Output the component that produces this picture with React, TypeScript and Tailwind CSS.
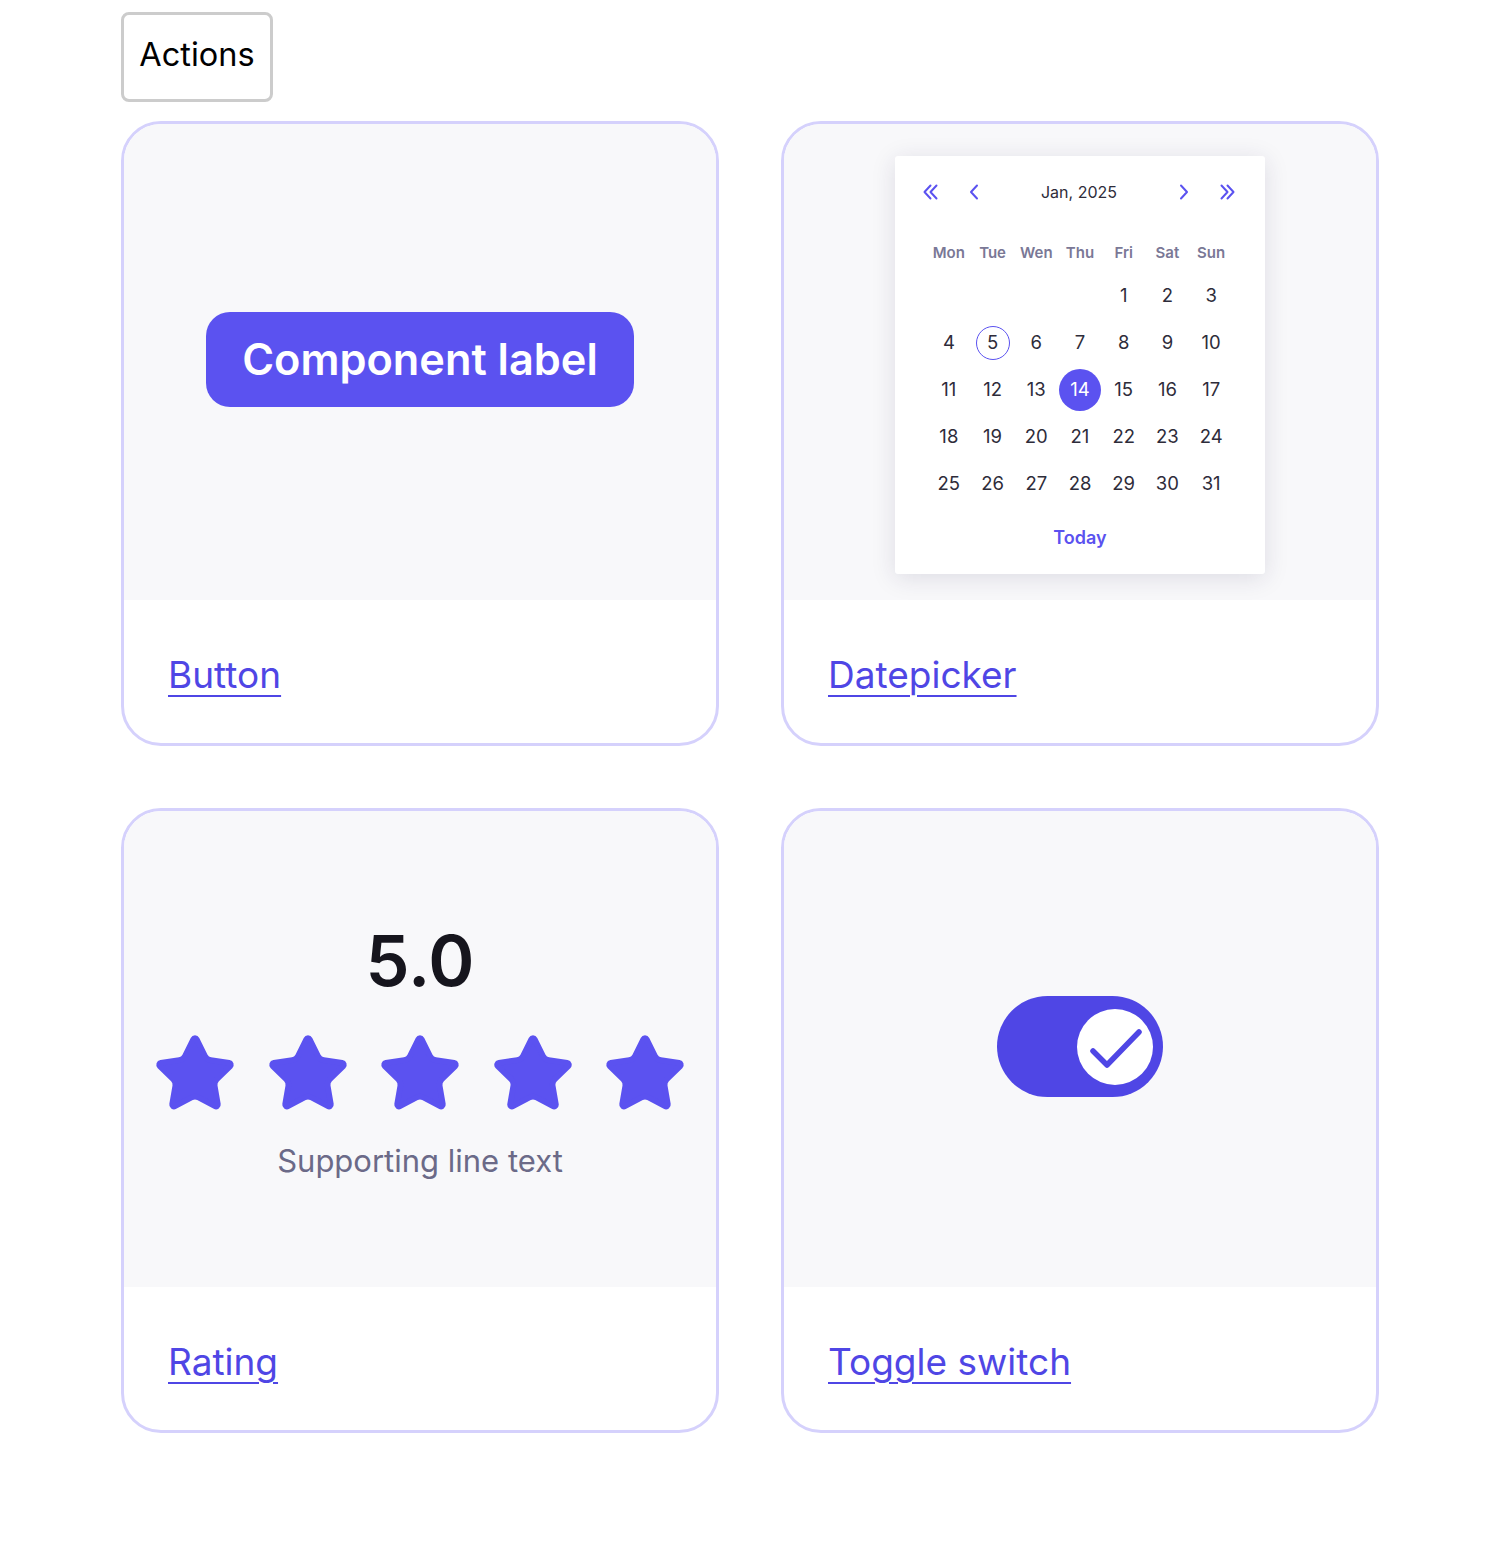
import { Star } from 'lucide-react';

const font = { fontFamily: 'Inter, "Noto Sans", sans-serif' };

const days: (number | null)[] = [null, null, null, null, 1, 2, 3, ...Array.from({ length: 28 }, (_, i) => i + 4)];
const weekdays = ['Mon', 'Tue', 'Wen', 'Thu', 'Fri', 'Sat', 'Sun'];

function Chevron({ double, dir }: { double?: boolean; dir: 'left' | 'right' }) {
  const flip = dir === 'right' ? 'scale(-1,1) translate(-18,0)' : undefined;
  return (
    <svg width="18" height="18" viewBox="0 0 18 18" fill="none" stroke="#5b52f0" strokeWidth="2" strokeLinecap="round" strokeLinejoin="round">
      <g transform={flip}>
        {double ? (
          <>
            <path d="M8.5 2.5 L2.5 9 L8.5 15.5" />
            <path d="M14.5 2.5 L8.5 9 L14.5 15.5" />
          </>
        ) : (
          <path d="M12 2.5 L6 9 L12 15.5" />
        )}
      </g>
    </svg>
  );
}

function Card({ title, children, top = 'center' }: { title: string; children: React.ReactNode; top?: 'center' | 'start' }) {
  return (
    <div className="border-[3px] border-[#d5d1fc] rounded-[40px] overflow-hidden bg-white">
      <div className={`h-[476px] bg-[#f8f8fa] flex justify-center ${top === 'center' ? 'items-center' : 'items-start pt-[32px]'}`}>
        {children}
      </div>
      <div className="h-[143px] px-[44px] pt-[5px] flex items-center">
        <a href="#" className="text-[37px] text-[#4f46e5] underline decoration-2 underline-offset-[7px] leading-none">
          {title}
        </a>
      </div>
    </div>
  );
}

function Datepicker() {
  return (
    <div className="w-[370px] bg-white rounded-[3px] shadow-[0_4px_24px_rgba(40,30,80,0.13)] px-[32px] pt-[24px] pb-[23px]">
      <div className="h-[24px] flex items-center">
        <div className="w-[28px] flex justify-center -ml-[10px]"><Chevron double dir="left" /></div>
        <div className="w-[28px] flex justify-center ml-[15px]"><Chevron dir="left" /></div>
        <div className="flex-1 text-center text-[16px] text-[#2e2c3a]">Jan, 2025</div>
        <div className="w-[28px] flex justify-center mr-[15px]"><Chevron dir="right" /></div>
        <div className="w-[28px] flex justify-center -mr-[8px]"><Chevron double dir="right" /></div>
      </div>
      <div className="grid grid-cols-7 mt-[37px] h-[24px] items-center">
        {weekdays.map((d) => (
          <div key={d} className="text-center text-[15px] font-semibold text-[#7a7896]">{d}</div>
        ))}
      </div>
      <div className="grid grid-cols-7 mt-[7px]">
        {days.map((d, i) => (
          <div key={i} className="h-[47px] flex items-center justify-center text-[18.5px] text-[#2e2c3a]">
            {d === 5 ? (
              <span className="w-[34px] h-[34px] rounded-full border-[1.5px] border-[#5b52f0] flex items-center justify-center">5</span>
            ) : d === 14 ? (
              <span className="w-[42px] h-[42px] rounded-full bg-[#5b52f0] text-white flex items-center justify-center">14</span>
            ) : (
              d
            )}
          </div>
        ))}
      </div>
      <div className="mt-[16px] h-[28px] flex items-center justify-center text-[18px] font-semibold text-[#5b52f0]">Today</div>
    </div>
  );
}

function Rating() {
  return (
    <div className="flex flex-col items-center">
      <div className="text-[70px] font-semibold text-[#16151d] leading-none mt-[4px]">5.0</div>
      <div className="flex gap-[26.5px] mt-[35px]">
        {[0, 1, 2, 3, 4].map((i) => (
          <Star key={i} size={86} fill="#5b52f0" color="#5b52f0" strokeWidth={1.6} />
        ))}
      </div>
      <div className="mt-[28px] text-[31px] text-[#6b6a88] leading-none">Supporting line text</div>
    </div>
  );
}

function Toggle() {
  return (
    <div className="w-[166px] h-[101px] mb-[5px] rounded-full bg-[#4f46e5] flex items-center justify-end pr-[10px]">
      <div className="w-[76px] h-[76px] rounded-full bg-white">
        <svg width="76" height="76" viewBox="0 0 76 76" fill="none">
          <path d="M16 42 L30 56 L62 23" stroke="#4f46e5" strokeWidth="5.5" strokeLinecap="round" strokeLinejoin="round" />
        </svg>
      </div>
    </div>
  );
}

export default function App() {
  return (
    <div className="min-h-[1554px] bg-white" style={font}>
      <div className="w-[1258px] mx-auto pt-[12px]">
        <button className="w-[152px] h-[90px] border-[3px] border-[#cccccc] rounded-[8px] bg-white text-[32.5px] text-black pb-[3px]">
          Actions
        </button>
        <div className="grid grid-cols-2 gap-[62px] mt-[19px]">
          <Card title="Button">
            <button className="w-[428px] h-[95px] mb-[6px] rounded-[24px] bg-[#5b52f0] text-white text-[43.3px] font-semibold">
              Component label
            </button>
          </Card>
          <Card title="Datepicker" top="start">
            <Datepicker />
          </Card>
          <Card title="Rating">
            <Rating />
          </Card>
          <Card title="Toggle switch">
            <Toggle />
          </Card>
        </div>
      </div>
    </div>
  );
}
